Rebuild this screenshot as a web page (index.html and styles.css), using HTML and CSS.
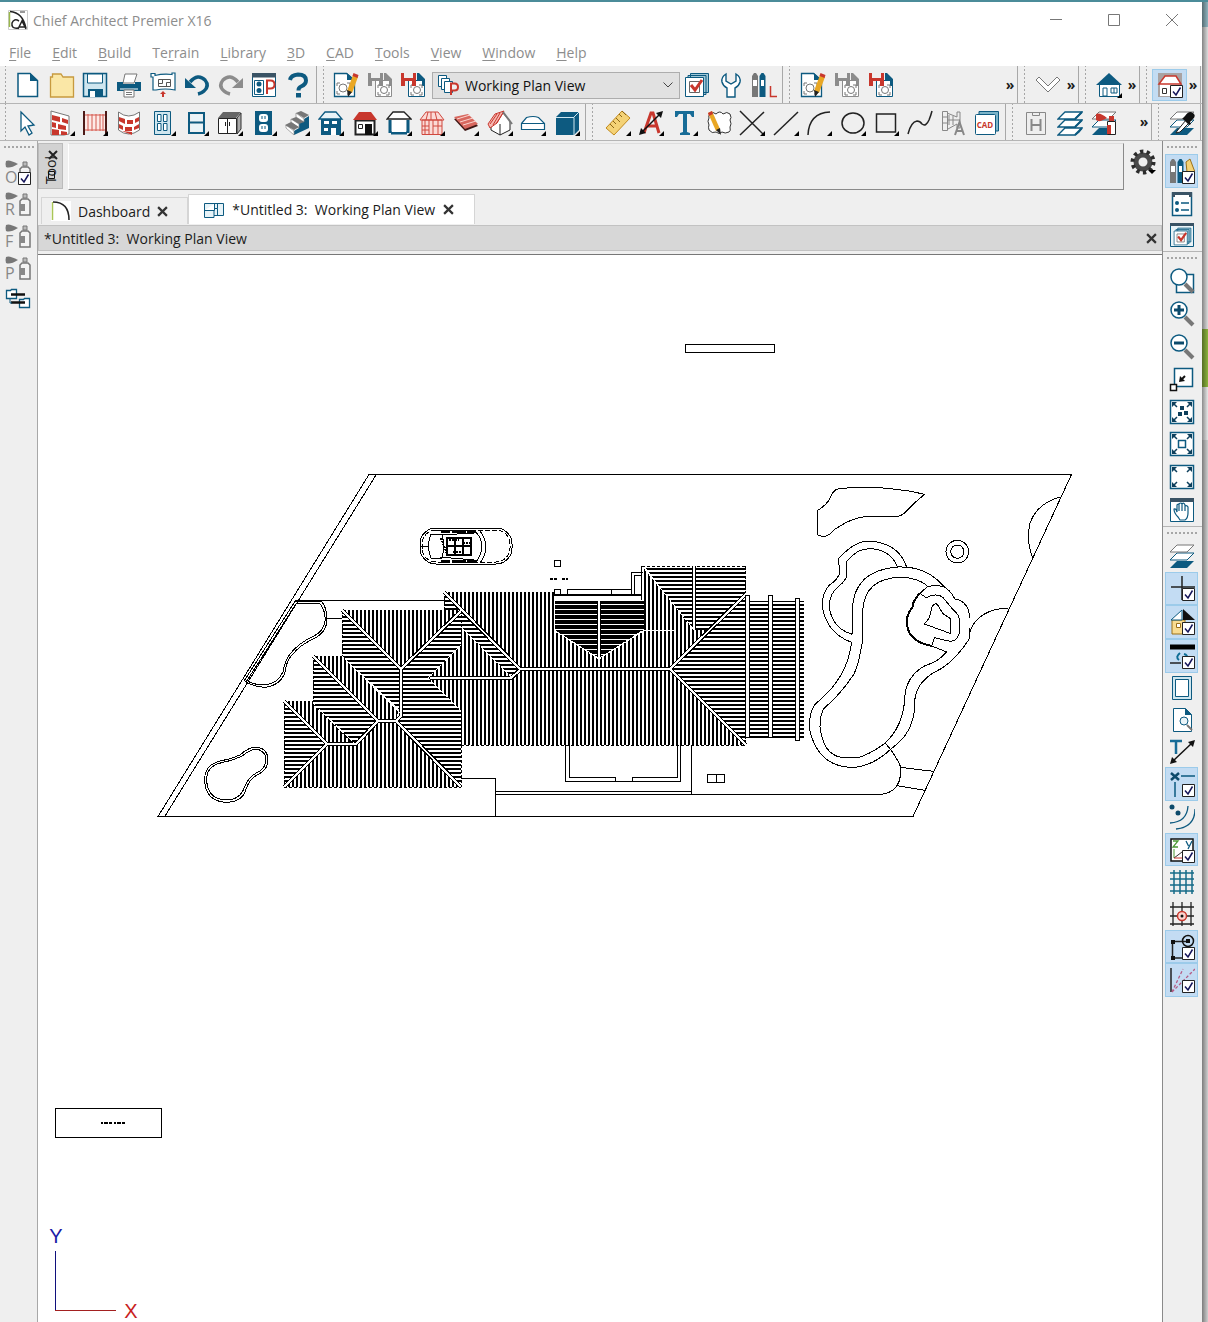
FILE: index.html
```html
<!DOCTYPE html>
<html lang="en">
<head>
<meta charset="utf-8">
<title>Chief Architect Premier X16</title>
<link rel="stylesheet" href="styles.css">
</head>
<body>
<svg class="defs" aria-hidden="true">
<defs>
<symbol id="ck" viewBox="0 0 26 26"><path d="M13.500 13.500h12v12h-12z" fill="#fff" stroke="#222"/><path d="M16 19.500l3 3.500 4.500-7.500" fill="none" stroke="#15155a" stroke-width="1.500"/></symbol>
<symbol id="dd" viewBox="0 0 26 26"><path d="M26 21v5h-5z" fill="#000"/></symbol>
<symbol id="new" viewBox="0 0 26 26"><path d="M3 1.500h12l7.500 7v16H3z" fill="#fff" stroke="#0d5a80" stroke-width="1.500"/><path d="M15 1v8h8z" fill="#0d5a80"/></symbol>
<symbol id="open" viewBox="0 0 26 26"><path d="M1.500 5h2V2h8.500l2 3h10.500v20h-23z" fill="#fae7a6" stroke="#c79a3f" stroke-width="1.300"/></symbol>
<symbol id="save" viewBox="0 0 26 26"><path d="M1.500 1.500h23v23h-23z" fill="#cfe6ef" stroke="#0d5a80" stroke-width="1.500"/><path d="M5.500 2h15v9h-15z" fill="#fff" stroke="#0d5a80"/><path d="M6 17h15v8H6z" fill="#0d5a80"/><path d="M8 19h5v6H8z" fill="#fff"/></symbol>
<symbol id="print" viewBox="0 0 26 26"><path d="M9 2h12l-3 9H7z" fill="#fff" stroke="#777"/><path d="M1 10h6v2h12v-2h6v9H1z" fill="#0d5a80"/><path d="M4 17h18" stroke="#fff"/><path d="M8 18h10v7H8z" fill="#fff" stroke="#777"/><path d="M10 20.500h6m-6 2h6" stroke="#777"/></symbol>
<symbol id="plot" viewBox="0 0 26 26"><path d="M1 1.500h4v2q8-2 17-1V1h3v17q-10-2-19 0H3V5H1z" fill="#fff" stroke="#0d5a80" stroke-width="1.200"/><path d="M8.500 7.500h12v7h-12zm0 4h4v-4m4 7v-4h4" fill="none" stroke="#555"/><path d="M13 19l3 3h-2v3h-2v-3h-2z" fill="#c8372d"/></symbol>
<symbol id="undo" viewBox="0 0 26 26"><path d="M6 10q8-9 15-2 5 6-1 11-2 2-6 3" fill="none" stroke="#0d5a80" stroke-width="3.500"/><path d="M1 6v10h11z" fill="#0d5a80"/></symbol>
<symbol id="redo" viewBox="0 0 26 26"><path d="M20 10q-8-9-15-2-5 6 1 11 2 2 6 3" fill="none" stroke="#8c8c8c" stroke-width="3.500"/><path d="M25 6v10H14z" fill="#8c8c8c"/></symbol>
<symbol id="prefs" viewBox="0 0 26 26"><path d="M1.500 1.500h23v23h-23z" fill="#fff" stroke="#0d5a80"/><path d="M1 1h24v4.500H1z" fill="#3a5365"/><path d="M3.500 8.500h9v14h-9z" fill="#fff" stroke="#0d5a80"/><circle cx="8" cy="12" r="2.500" fill="#0d5a80"/><circle cx="8" cy="18.500" r="2.500" fill="#0d5a80"/><path d="M16 22V8.500h3.500q4 0 4 4t-4 4H16" fill="none" stroke="#c8372d" stroke-width="2"/></symbol>
<symbol id="help" viewBox="0 0 26 26"><path d="M5 8q1-5 8-5.500 8 0 8 6 0 4-5 6-2.500 1-2.500 4" fill="none" stroke="#0d5a80" stroke-width="4"/><path d="M11 21h5v4.500h-5z" fill="#0d5a80"/></symbol>
<symbol id="viewedit" viewBox="0 0 26 26"><path d="M1.500 1.500h12l8 7v16h-20z" fill="#fff" stroke="#0d5a80" stroke-width="1.300"/><path d="M14 1v7h8z" fill="#0d5a80"/><path d="M4 14v-3h3m7 0h3v3m0 5v3h-3m-7 0H4v-3" fill="none" stroke="#777"/><circle cx="10" cy="16" r="4" fill="none" stroke="#777"/><path d="M20 3l5 2-6 16-5-2z" fill="#e9a724"/><path d="M20.500 1l5 2-1 3-5-2z" fill="#c8372d"/><path d="M14 18l5 2-4 5z" fill="#222"/></symbol>
<symbol id="sv" viewBox="0 0 26 26"><path d="M8.500 8.500h16v16h-16z" fill="#fff" stroke="currentColor"/><path d="M17 1h2l6 6v7h-3V9h-5z" fill="currentColor"/><path d="M11 16v-3h3m5 0h3v3m0 4v3h-3m-5 0h-3v-3" fill="none" stroke="#777"/><circle cx="17" cy="18" r="3.500" fill="none" stroke="#777"/></symbol>
<symbol id="hh" viewBox="0 0 26 26"><path d="M1 1h3v5h9V1h3v13h-4V9H5v5H1z" fill="currentColor"/></symbol>
<symbol id="viewsP" viewBox="0 0 26 26"><path d="M2.500 3.500h8v11h-8z" fill="#fff" stroke="#0d5a80"/><path d="M5.500 6.500h8v11h-8z" fill="#fff" stroke="#0d5a80"/><path d="M8.500 9.500h8v11h-8z" fill="#fff" stroke="#0d5a80"/><path d="M15 23V11.500h3.500q3.500 0 3.500 3.500t-3.500 3.500H15" fill="#eee" stroke="#c8372d" stroke-width="2"/></symbol>
<symbol id="layerck" viewBox="0 0 26 26"><path d="M6.500 1.500h18v19h-18zM4 3.500h18v19H4z" fill="#9fc7d7" stroke="#0d5a80"/><path d="M1.500 5.500h18v19h-18z" fill="#fff" stroke="#0d5a80"/><path d="M5.500 9.500h10v11h-10z" fill="none" stroke="#666"/><path d="M7 13l4 5 7-10" fill="none" stroke="#c8372d" stroke-width="3"/></symbol>
<symbol id="wrench" viewBox="0 0 26 26"><path d="M8 2v7l5 3 5-3V2q5 3 4 8-1 4-5 6v9H9v-9q-4-2-5-6-1-5 4-8z" fill="#fff" stroke="#0d5a80" stroke-width="1.400"/></symbol>
<symbol id="books" viewBox="0 0 26 26"><path d="M1 25V4l2-3h2l2 3v21z" fill="#777"/><path d="M2 8h4v6H2z" fill="#fff"/><path d="M8.500 25V4l2-3h2l2 3v21z" fill="#0d5a80"/><path d="M10 8h3v6h-3z" fill="#fff"/></symbol>
<symbol id="arrow" viewBox="0 0 26 26"><path d="M6 2l13 13-6 1 4 7-3 2-4-8-4 4z" fill="#fff" stroke="#0d5a80" stroke-width="1.300"/></symbol>
<symbol id="wall" viewBox="0 0 26 26"><path d="M2 1l18 5v18l-5 1H2z" fill="#fff" stroke="#777"/><path d="M3 5l8 2v5l-8-2zm10 3l6 2v4l-6-2zM3 12l4 1v5l-4-1zm6 2l8 2v4l-8-1zM3 19l7 1v5H3zm9 2l6 1v3h-6z" fill="#c8372d"/></symbol>
<symbol id="rail" viewBox="0 0 26 26"><path d="M2 4h22v17H2z" fill="#fdeae7"/><path d="M2 5h22M2 20h22M6 4v17M10 4v17M14 4v17M18 4v17M21 4v17" stroke="#d25a50"/><path d="M2 1v24M24 1v24" stroke="#4d1a17" stroke-width="2"/></symbol>
<symbol id="cwall" viewBox="0 0 26 26"><path d="M2.500 2q10 8 21 0v18q-11 8-21 0z" fill="#fff" stroke="#777"/><path d="M3 7l6 2v5l-6-3zm8 3l6 0v4h-6zm8-1l4-2v4l-4 2zM3 14l4 2v4l-4-2zm6 3h7v4H9zm9 0l5-3v4l-5 2zM6 21l10 1v3z" fill="#c8372d"/></symbol>
<symbol id="door" viewBox="0 0 26 26"><path d="M4.500 1.500h16v23h-16z" fill="#cfe6ef" stroke="#0d5a80"/><path d="M7.500 4.500h3.500v7H7.500zm6 0H17v7h-3.500zm-6 9h3.500v7H7.500zm6 0H17v7h-3.500z" fill="#fff" stroke="#0d5a80"/></symbol>
<symbol id="window" viewBox="0 0 26 26"><path d="M6 2v22M21 2v22M6 3h15M6 12.500h15M5 23h17" stroke="#0d5a80" stroke-width="2" fill="none"/><path d="M8 5h11v6H8zm0 9h11v7H8z" fill="#eaf4f8"/></symbol>
<symbol id="cabinet" viewBox="0 0 26 26"><path d="M6 2h18l-5 6H1z" fill="#666"/><path d="M1.500 8.500h18v15h-18zm9 0v15" fill="#fff" stroke="#222"/><path d="M20 8l4-5v16l-4 5z" fill="#aaa" stroke="#333"/><path d="M8.500 12v4m4-4v4" stroke="#222"/></symbol>
<symbol id="outlet" viewBox="0 0 26 26"><path d="M4 1h17v24H4z" fill="#0d5a80"/><rect x="8" y="4" width="9" height="8" rx="3" fill="#fff"/><rect x="8" y="14" width="9" height="8" rx="3" fill="#fff"/><path d="M11 6v3m3-3v3m-3 7v3m3-3v3" stroke="#0d5a80"/></symbol>
<symbol id="stairs" viewBox="0 0 26 26"><path d="M25 6v12L10 25v-4l5-3v-5l5-3V9z" fill="#0d5a80"/><path d="M12 3v4l8 5V9zM7 9v3l8 6v-4zM2 15v3l8 7v-4z" fill="#fff" stroke="#888" stroke-width=".7"/><path d="M12 3l5-2 8 4-5 3zM7 9l5-2 8 5-5 2zM1 15l6-3 8 5-5 3z" fill="#777"/></symbol>
<symbol id="hblue" viewBox="0 0 26 26"><path d="M3 9h20v16H3z" fill="#0d5a80"/><path d="M7 2h11l6 7H1z" fill="#eaf4f8" stroke="#0d5a80" stroke-width="1.300"/><path d="M6 11h5v3H6zm8 0h5v3h-5zm-8 7h4v3H6zm7 0h5v7h-5z" fill="#fff"/></symbol>
<symbol id="hred" viewBox="0 0 26 26"><path d="M3.500 10.500h19v14h-19z" fill="#fff" stroke="#222" stroke-width="2"/><path d="M7 2h12l6 8H1z" fill="#c8372d"/><path d="M13 14h7v11h-7z" fill="#111"/><path d="M6.500 14.500h4v4h-4z" fill="none" stroke="#222"/></symbol>
<symbol id="hout" viewBox="0 0 26 26"><path d="M4 10v13m18-13v13M5 23h16" stroke="#0d5a80" stroke-width="3"/><path d="M6 10h14v12H6z" fill="#fff"/><path d="M7 2h11l7 7H1z" fill="#fff" stroke="#222" stroke-width="1.300"/></symbol>
<symbol id="hframe" viewBox="0 0 26 26"><path d="M3 10h20v14.500H3zM7 2h12l6 8H1z" fill="#fbdad6" stroke="#d0483e"/><path d="M9 2l-2 8m5-8v8m4-8l2 8M6 10v15m4-15v15m4-15v15m5-15v15M3 16h7m4 0h9M3 20h7" stroke="#d0483e"/></symbol>
<symbol id="slab" viewBox="0 0 26 26"><path d="M1 9l14-4 10 11-13 5z" fill="#3f1715"/><path d="M1 7l14-3 10 10-13 5z" fill="#d8685f"/><path d="M4 9l13-4M7 12l13-4M10 15l13-4" stroke="#fbd5d0"/></symbol>
<symbol id="hroof" viewBox="0 0 26 26"><path d="M4 13v7l9 5 10-5v-9L16 3" fill="#fff" stroke="#222"/><path d="M1 14L8 4l9-3-7 12-7 5z" fill="#f7b9b3" stroke="#c8372d"/><path d="M3 14l7-10m-4 11l7-12m-4 11l7-11" stroke="#c8372d"/><path d="M16 2l9 12" stroke="#777" stroke-width="2"/><path d="M13 14v11" stroke="#222"/></symbol>
<symbol id="dome" viewBox="0 0 26 26"><path d="M1.500 13.500l5-6q7-2 12 0l6 6v6h-23zM1.500 13.500h23" fill="#fff" stroke="#0d5a80" stroke-width="1.200"/></symbol>
<symbol id="cube" viewBox="0 0 26 26"><path d="M2 7l5-5h18v18l-5 5H2z" fill="#0d5a80"/><path d="M2 7.500h18V25M20 7l5-5" fill="none" stroke="#cfe6ef"/></symbol>
<symbol id="ruler" viewBox="0 0 26 26"><path d="M1 18L17 1l8 7L9 25z" fill="#f4d276" stroke="#c28a1d"/><path d="M5 14l4 4m-1-7l3 3m0-6l4 4m-1-8l3 3m0-6l4 4" stroke="#8b6516"/></symbol>
<symbol id="Aarrow" viewBox="0 0 26 26"><path d="M6 23L13 3h2l6 20M9 16h10" fill="none" stroke="#c8372d" stroke-width="3"/><path d="M3 23L23 3" stroke="#111" stroke-width="1.500"/><path d="M25 1l-2 7-5-5zM1 25l2-7 5 5z" fill="#111"/></symbol>
<symbol id="T" viewBox="0 0 26 26"><path d="M3 1h19v6h-2l-2-3h-3v18l3 1v2H8v-2l3-1V4H7L5 7H3z" fill="#176c97"/></symbol>
<symbol id="cloud" viewBox="0 0 26 26"><path d="M4 4q3-3 6 0 4-4 7 0 4-3 7 0 2 4 0 6 2 4 0 7 1 4-1 5-4 2-7 0-3 3-6 0-4 2-7-2-1-3 0-5-2-4 0-7-1-2 1-4z" fill="#fff" stroke="#333"/><path d="M2 3l4-2 8 18-4 2z" fill="#e9a724"/><path d="M2 3l4-2 1 3-4 2z" fill="#c8372d"/><path d="M10 20l4-2 1 7z" fill="#222"/></symbol>
<symbol id="x" viewBox="0 0 26 26"><path d="M1 1l24 24M25 2L1 25" stroke="#222" stroke-width="1.500"/></symbol>
<symbol id="line" viewBox="0 0 26 26"><path d="M1 25L25 2" stroke="#222" stroke-width="1.500"/></symbol>
<symbol id="arc" viewBox="0 0 26 26"><path d="M2 25Q3 3 24 2" fill="none" stroke="#222" stroke-width="1.500"/></symbol>
<symbol id="circ" viewBox="0 0 26 26"><ellipse cx="13" cy="13" rx="11" ry="10" fill="none" stroke="#222" stroke-width="1.500"/></symbol>
<symbol id="sq" viewBox="0 0 26 26"><path d="M3.500 4h19v18h-19z" fill="none" stroke="#222" stroke-width="1.500"/></symbol>
<symbol id="spline" viewBox="0 0 26 26"><path d="M1 24q3-12 9-13 3 0 5 3 4 3 7-4 2-5 3-9" fill="none" stroke="#222" stroke-width="1.500"/></symbol>
<symbol id="deta" viewBox="0 0 26 26"><path d="M1.500 1.500h5v19h-5zM1 7h6m-6 6h6M6 3l10 4V2h3v16h-3v-4l-9 5M8 5v10m4-9v9m-5-5h12" fill="none" stroke="#888"/><path d="M14 25l4.500-13 4.500 13m-7-4h6" fill="none" stroke="#888" stroke-width="2"/></symbol>
<symbol id="cadb" viewBox="0 0 26 26"><path d="M5 1.500h19.500V21H5z" fill="#7cb4c8" stroke="#0d5a80"/><rect x="1.500" y="4.500" width="20" height="20" rx="1" fill="#fff" stroke="#0d5a80"/></symbol>
<symbol id="clipH" viewBox="0 0 26 26"><path d="M3.500 2.500h19v22h-19zm6 0v3h7v-3" fill="#eee" stroke="#888"/><path d="M8.500 9v12M17.500 9v12M8 15h10" stroke="#888" stroke-width="2"/></symbol>
<symbol id="layers" viewBox="0 0 26 26"><path d="M1 25l7-7h17l-3 4-4 3zM1 17l7-7h17l-7 7zM1 9l7-7h17l-7 7z" fill="#fff" stroke="#0d5a80" stroke-width="1.300"/><path d="M18 25l7-7m-7-1l7-7m-7-1l7-7" stroke="#0d5a80" stroke-width="2"/></symbol>
<symbol id="lay3" viewBox="0 0 26 26"><path d="M1 25l7-7h17l-7 7z" fill="#0d5a80"/><path d="M1 17l7-7h17l-7 7z" fill="#fff" stroke="#0d5a80"/><path d="M1 9l7-7h17l-7 7z" fill="#fff" stroke="#777"/></symbol>
<symbol id="spray" viewBox="0 0 26 26"><path d="M16.500 11.500h8v13h-8z" fill="#fff" stroke="#222"/><path d="M18 6h5v5h-5zM16 15h4v9h-4z" fill="#c8372d"/><path d="M5 4q4-2 11 4-8 5-11 2z" fill="#c8372d"/></symbol>
<symbol id="dropper" viewBox="0 0 26 26"><path d="M8 21l9-11 3 3-9 9-4 1z" fill="#fff" stroke="#222"/><path d="M14 8l2-2q4-6 8-3t-1 7l-2 2 1 2-2 1-7-7z" fill="#111"/></symbol>
<symbol id="down" viewBox="0 0 26 26"><path d="M1 8l3-3 9 9 9-9 3 3-12 12z" fill="#fff" stroke="#777"/></symbol>
<symbol id="home" viewBox="0 0 26 26"><path d="M3.500 12h20v12.500h-20z" fill="#fff" stroke="#0d5a80"/><path d="M13 1l13 12H0z" fill="#0d5a80"/><path d="M7 16h4v8H7zm8 0h6v5h-6zm3 0v5" fill="none" stroke="#0d5a80"/></symbol>
<symbol id="room" viewBox="0 0 26 26"><path d="M1 1h24v24H1z" fill="#a9a3a3"/><path d="M3 11h20v13H3z" fill="#fff"/><path d="M8 4h11l5 8H2z" fill="#fff" stroke="#c8372d" stroke-width="1.500"/><path d="M5.500 16.500h4v5h-4z" fill="none" stroke="#333"/></symbol>
<symbol id="gear" viewBox="0 0 26 26"><circle cx="13" cy="13" r="7" fill="none" stroke="#4a4a4a" stroke-width="5"/><circle cx="13" cy="13" r="10.500" fill="none" stroke="#2c2c2c" stroke-width="4" stroke-dasharray="3.300 3.300"/><path d="M18 21h8l-4 4z" fill="#000"/></symbol>
<symbol id="can" viewBox="0 0 26 26"><path d="M1 2q3-2 12 3-8 5-12 3-1-3 0-6z" fill="#777"/><path d="M15 24V10l2-2h6l2 2v14z" fill="#f4f4f4" stroke="#777" stroke-width="1.500"/><path d="M18 3h4v4h-4z" fill="#bbb" stroke="#777"/><path d="M15 13h5v7h-5z" fill="#888"/></symbol>
<symbol id="share" viewBox="0 0 26 26"><path d="M1.500 3.500h4l1-1h5v9h-10zM14.500 12.500h4l1-1h5v9h-10z" fill="#fff" stroke="#0d5a80" stroke-width="1.300"/><path d="M6 7.500h14M6 15.500h14" stroke="#111" stroke-width="2.500"/><path d="M5 12v4h2" fill="none" stroke="#0d5a80"/></symbol>
<symbol id="list" viewBox="0 0 26 26"><path d="M3.500 2h19v22.500h-19z" fill="#fff" stroke="#0d5a80" stroke-width="1.500"/><path d="M3 1h20v5H3z" fill="#3a5365"/><path d="M6 4h14v3H6z" fill="#fff"/><circle cx="8" cy="12" r="2" fill="#0d5a80"/><circle cx="8" cy="19" r="2" fill="#0d5a80"/><path d="M12 12h8m-8 7h8" stroke="#0d5a80" stroke-width="1.500"/></symbol>
<symbol id="mag" viewBox="0 0 26 26"><path d="M16 16l8 8" stroke="#777" stroke-width="4"/><circle cx="10" cy="9" r="8" fill="#fff" stroke="#0d5a80" stroke-width="1.500"/></symbol>
<symbol id="pan1" viewBox="0 0 26 26"><path d="M5.500 2.500h18v18h-18z" fill="#fff" stroke="#0d5a80" stroke-width="1.500"/><path d="M1.500 18.500h6v6h-6z" fill="#fff" stroke="#111" stroke-width="1.500"/><path d="M10 16l1-6 5 5z" fill="#111"/><path d="M12 14l4-4" stroke="#111" stroke-width="2"/></symbol>
<symbol id="fit" viewBox="0 0 26 26"><path d="M1.500 1.500h23v23h-23z" fill="#fff" stroke="#0d5a80" stroke-width="1.500"/><path d="M3 3h5L3 8zM23 3v5l-5-5zM3 23v-5l5 5zM23 23h-5l5-5z" fill="#0d3f5c"/><path d="M5 5l3 3m13-3l-3 3M5 21l3-3m13 3l-3-3" stroke="#0d3f5c" stroke-width="1.500"/></symbol>
<symbol id="hand" viewBox="0 0 26 26"><path d="M1.500 1.500h23v23h-23z" fill="#fff" stroke="#0d5a80"/><path d="M1 1h24v4H1z" fill="#3a5365"/><path d="M9 20q-4-4-4-8 2-1 3 3V8q2-2 2 0V7q2-2 3 0v0q2-2 3 1v1q2-1 3 1v6q0 5-3 7h-5zM10 8v6m3-7v7m3-6v6" fill="none" stroke="#0d5a80" stroke-width="1.200"/></symbol>
<symbol id="cross" viewBox="0 0 26 26"><path d="M13 1v24M2 12h24" stroke="#222" stroke-width="1.500"/></symbol>
<symbol id="halfh" viewBox="0 0 26 26"><path d="M3 11h13v14H3z" fill="#f8dc91" stroke="#9b7018"/><path d="M7.500 14.500h4v4h-4z" fill="#fff" stroke="#9b7018"/><path d="M13 1v10H2z" fill="#fff" stroke="#0d5a80"/><path d="M14 0l12 11H14z" fill="#111"/></symbol>
<symbol id="lw" viewBox="0 0 26 26"><path d="M1 4h25" stroke="#000" stroke-width="5"/><path d="M11 10q-5 4-1 7m5-6q4 1 3 5" fill="none" stroke="#0d6d95" stroke-width="2"/><path d="M1 20h11" stroke="#222" stroke-width="1.500"/></symbol>
<symbol id="sheet" viewBox="0 0 26 26"><path d="M3.500 1.500h19v23h-19z" fill="#cfe6ef" stroke="#0d5a80"/><path d="M6.500 4.500h13v17h-13z" fill="#fff" stroke="#0d5a80"/></symbol>
<symbol id="prev" viewBox="0 0 26 26"><path d="M4.500 1.500h12l6 6v17h-18z" fill="#fff" stroke="#0d5a80"/><path d="M16 1v7h7z" fill="#0d5a80"/><circle cx="15" cy="14" r="4" fill="#eaf4f8" stroke="#0d5a80"/><path d="M18 18l5 5" stroke="#777" stroke-width="2"/></symbol>
<symbol id="Tdim" viewBox="0 0 26 26"><path d="M1 2h12M7 2v13" stroke="#176c97" stroke-width="2.500"/><path d="M4 22L23 4" stroke="#111" stroke-width="1.500"/><path d="M26 1l-2 7-5-5zM1 25l2-7 5 5z" fill="#111"/></symbol>
<symbol id="snapx" viewBox="0 0 26 26"><path d="M2 2l8 7M10 2L2 9" stroke="#0d4a6b" stroke-width="2.500"/><path d="M12 5h14M6 11v15" stroke="#0d5a80" stroke-width="1.500"/></symbol>
<symbol id="waves" viewBox="0 0 26 26"><circle cx="3" cy="3" r="2.500" fill="#0d4a6b"/><circle cx="9" cy="9" r="2.500" fill="#0d4a6b"/><path d="M1 19q17-1 18-17M7 25q19-2 19-20" fill="none" stroke="#0d5a80" stroke-width="1.300"/></symbol>
<symbol id="zy" viewBox="0 0 26 26"><path d="M2 2h22v22H2z" fill="#fff" stroke="#111" stroke-width="1.500"/><path d="M4 4h5l-5 6h5" fill="none" stroke="#4c9a35" stroke-width="1.300"/><path d="M17 4l2.500 5M23 4l-4 8" fill="none" stroke="#0d5a80" stroke-width="1.300"/><path d="M5 21V12" stroke="#4c9a35"/><path d="M5 21l8-6" stroke="#333"/><path d="M5 21h8" stroke="#c8372d"/></symbol>
<symbol id="grid" viewBox="0 0 26 26"><path d="M5 1v24m6-24v24m6-24v24m6-24v24M1 4h24M1 10h24M1 16h24M1 22h24" stroke="#176c89" stroke-width="1.500"/></symbol>
<symbol id="gsnap" viewBox="0 0 26 26"><path d="M4 1v24m9-24v24m9-24v24M1 6h24M1 15h24M1 23h24" stroke="#222" stroke-width="1.300"/><circle cx="13" cy="15" r="4.500" fill="#fbd5d0" stroke="#c8372d" stroke-width="1.500"/><circle cx="13" cy="15" r="1.500" fill="#111"/></symbol>
<symbol id="osnap" viewBox="0 0 26 26"><path d="M3.500 7.500h16M3.500 7v17H14" fill="none" stroke="#222" stroke-width="1.500"/><circle cx="19" cy="7" r="5.500" fill="none" stroke="#111" stroke-width="1.500"/><path d="M2 6h4v4H2zm0 16h4v4H2zM17 5h4v4h-4z" fill="#111"/></symbol>
<symbol id="ang" viewBox="0 0 26 26"><path d="M2 1v24" stroke="#222" stroke-width="1.500"/><path d="M3 25L14 2M3 25L26 2" stroke="#b55b84" stroke-width="1.300" stroke-dasharray="3 2"/></symbol>
<symbol id="planico" viewBox="0 0 20 16"><path d="M.500 1.500h19v12H10v2H.500zM.500 8.500h10v-7m0 5h3v7m0-7v-5M10 8.500v5" fill="#e7f3f8" stroke="#0d5a80"/></symbol>
<pattern id="v" width="4" height="4" patternUnits="userSpaceOnUse"><path d="M0 0h2v4H0z"/></pattern>
<pattern id="h" width="4" height="4" patternUnits="userSpaceOnUse"><path d="M0 0h4v2H0z"/></pattern>
<pattern id="k" width="5" height="5" patternUnits="userSpaceOnUse"><path d="M0 0h5v4H0z"/></pattern>
</defs>
</svg>
<div class="desktop">
<div class="app">
<header class="title">
<svg class="logo" viewBox="0 0 20 20" aria-hidden="true"><path d="M.500.500h19v19H.500z" fill="#fff" stroke="#ccc"/><path d="M1.500 2v15" stroke="#9ab84a" stroke-width="1.500"/><path d="M2 1.500q13 1 16 17M11 11q-5-3-7 2-1 6 6 5M10 19l4-8 4 8m-7-2h6" fill="none" stroke="#222" stroke-width="1.500"/><path d="M12 2h5" stroke="#333"/></svg>
<h1>Chief Architect Premier X16</h1>
<div class="winbtns"><button aria-label="Minimize"><svg viewBox="0 0 12 12"><path d="M0 5.500h12"/></svg></button><button aria-label="Maximize"><svg viewBox="0 0 12 12"><path d="M.500.500h11v11H.500z"/></svg></button><button aria-label="Close"><svg viewBox="0 0 12 12"><path d="M0 0l12 12M12 0L0 12"/></svg></button></div>
</header>
<nav class="menu"><button><u>F</u>ile</button><button><u>E</u>dit</button><button><u>B</u>uild</button><button>Te<u>r</u>rain</button><button><u>L</u>ibrary</button><button><u>3</u>D</button><button><u>C</u>AD</button><button><u>T</u>ools</button><button><u>V</u>iew</button><button><u>W</u>indow</button><button><u>H</u>elp</button></nav>

<div class="bar first">
<div class="grp w-file"><button aria-label="New"><svg><use href="#new"/></svg></button><button aria-label="Open"><svg><use href="#open"/></svg></button><button aria-label="Save"><svg><use href="#save"/></svg></button><button aria-label="Print"><svg><use href="#print"/></svg></button><button aria-label="Send to layout"><svg><use href="#plot"/></svg></button><button aria-label="Undo"><svg><use href="#undo"/></svg></button><button aria-label="Redo"><svg><use href="#redo"/></svg></button><button aria-label="Preferences"><svg><use href="#prefs"/></svg></button><button aria-label="Help"><svg><use href="#help"/></svg></button></div>
<div class="grp w-view"><button aria-label="Edit view"><svg><use href="#viewedit"/></svg></button><button aria-label="Save view" class="dim"><svg><use href="#sv"/><use href="#hh"/></svg></button><button aria-label="Save view as"><svg><use href="#sv" class="blue"/><use href="#hh" class="red"/></svg></button>
<div class="combo"><svg><use href="#viewsP"/></svg><select aria-label="Plan view"><option>Working Plan View</option></select><svg class="caret" viewBox="0 0 10 6"><path d="M.500.500L5 5 9.500.500"/></svg></div>
<button aria-label="Layer sets"><svg><use href="#layerck"/></svg></button><button aria-label="Tools"><svg><use href="#wrench"/></svg></button><button aria-label="Library"><svg><use href="#books"/><path d="M19.500 14v10.500H26" fill="none" stroke="#c8372d" stroke-width="1.500"/></svg></button></div>
<div class="grp grow"><button aria-label="Edit layout"><svg><use href="#viewedit"/></svg></button><button aria-label="Save layout" class="dim"><svg><use href="#sv"/><use href="#hh"/></svg></button><button aria-label="Save layout as"><svg><use href="#sv" class="blue"/><use href="#hh" class="red"/></svg></button><button class="more" aria-label="More">»</button></div>
<div class="grp w-mini"><button aria-label="Down"><svg><use href="#down"/></svg></button><button class="more" aria-label="More">»</button></div>
<div class="grp w-mini"><button aria-label="Floor overview"><svg><use href="#home"/><use href="#dd"/></svg></button><button class="more" aria-label="More">»</button></div>
<div class="grp w-mini"><button class="on" aria-label="Reference floor"><svg><use href="#room"/><use href="#ck"/></svg></button><button class="more" aria-label="More">»</button></div>
</div>

<div class="bar">
<div class="grp w-build"><button aria-label="Select"><svg><use href="#arrow"/></svg></button><button aria-label="Wall"><svg><use href="#wall"/><use href="#dd"/></svg></button><button aria-label="Railing"><svg><use href="#rail"/><use href="#dd"/></svg></button><button aria-label="Curved wall"><svg><use href="#cwall"/></svg></button><button aria-label="Door"><svg><use href="#door"/><use href="#dd"/></svg></button><button aria-label="Window"><svg><use href="#window"/><use href="#dd"/></svg></button><button aria-label="Cabinet"><svg><use href="#cabinet"/><use href="#dd"/></svg></button><button aria-label="Electrical"><svg><use href="#outlet"/><use href="#dd"/></svg></button><button aria-label="Stairs"><svg><use href="#stairs"/><use href="#dd"/></svg></button><button aria-label="Floor"><svg><use href="#hblue"/><use href="#dd"/></svg></button><button aria-label="Roof"><svg><use href="#hred"/><use href="#dd"/></svg></button><button aria-label="Trim"><svg><use href="#hout"/><use href="#dd"/></svg></button><button aria-label="Framing"><svg><use href="#hframe"/><use href="#dd"/></svg></button><button aria-label="Slab"><svg><use href="#slab"/><use href="#dd"/></svg></button><button aria-label="Truss"><svg><use href="#hroof"/><use href="#dd"/></svg></button><button aria-label="Terrain"><svg><use href="#dome"/><use href="#dd"/></svg></button><button aria-label="Primitive"><svg><use href="#cube"/><use href="#dd"/></svg></button></div>
<div class="grp w-cad"><button aria-label="Measure"><svg><use href="#ruler"/><use href="#dd"/></svg></button><button aria-label="Dimension"><svg><use href="#Aarrow"/><use href="#dd"/></svg></button><button aria-label="Text"><svg><use href="#T"/><use href="#dd"/></svg></button><button aria-label="Revision cloud"><svg><use href="#cloud"/></svg></button><button aria-label="Point"><svg><use href="#x"/><use href="#dd"/></svg></button><button aria-label="Line"><svg><use href="#line"/><use href="#dd"/></svg></button><button aria-label="Arc"><svg><use href="#arc"/><use href="#dd"/></svg></button><button aria-label="Circle"><svg><use href="#circ"/><use href="#dd"/></svg></button><button aria-label="Box"><svg><use href="#sq"/><use href="#dd"/></svg></button><button aria-label="Spline"><svg><use href="#spline"/></svg></button><button aria-label="Detail"><svg><use href="#deta"/></svg></button><button aria-label="CAD block"><svg><use href="#cadb"/><text x="11" y="18" class="cadt">CAD</text></svg></button></div>
<div class="grp grow"><button aria-label="Hatch"><svg><use href="#clipH"/></svg></button><button aria-label="Layers"><svg><use href="#layers"/></svg></button><button aria-label="Paint layers"><svg><use href="#lay3"/><use href="#spray"/></svg></button><button class="more" aria-label="More">»</button></div>
<div class="grp w-one"><button aria-label="Layer eyedropper"><svg><use href="#lay3"/><use href="#dropper"/></svg></button></div>
</div>

<main class="work">
<aside class="left"><i class="hgrip"></i>
<button aria-label="Object painter"><svg><use href="#can"/><text x="0" y="24">O</text><use href="#ck"/></svg></button>
<button aria-label="Room painter"><svg><use href="#can"/><text x="0" y="24">R</text></svg></button>
<button aria-label="Floor painter"><svg><use href="#can"/><text x="0" y="24">F</text></svg></button>
<button aria-label="Plan painter"><svg><use href="#can"/><text x="0" y="24">P</text></svg></button>
<button aria-label="Project"><svg><use href="#share"/></svg></button></aside>
<section class="center">
<div class="dock"><button class="vert" aria-label="Close tool panel"><span>Tool</span><svg viewBox="0 0 26 46"><path d="M10 7l8 8M18 7l-8 8" stroke="#222" stroke-width="2"/><path d="M9.500 27.500h6v7h-6z" fill="none" stroke="#111"/></svg></button><div class="panel"></div><button class="gearbtn" aria-label="Settings"><svg><use href="#gear"/></svg></button></div>
<div class="tabs"><div class="tab"><svg class="ti" viewBox="0 0 20 20"><path d="M0 0h20v20H0z" fill="#fff"/><path d="M1.500 1v18" stroke="#a9c557" stroke-width="1.500"/><path d="M2 1Q18 1 18 19" fill="none" stroke="#222" stroke-width="1.500"/></svg><a href="#plan">Dashboard</a><button aria-label="Close Dashboard"><svg class="xx" viewBox="0 0 10 10"><path d="M1 1l8 8M9 1L1 9"/></svg></button></div>
<div class="tab act"><svg class="ti"><use href="#planico"/></svg><a href="#plan">*Untitled 3:&nbsp; Working Plan View</a><button aria-label="Close Untitled 3"><svg class="xx" viewBox="0 0 10 10"><path d="M1 1l8 8M9 1L1 9"/></svg></button></div></div>
<div class="sub"><h2>*Untitled 3:&nbsp; Working Plan View</h2><button aria-label="Close view"><svg class="xx" viewBox="0 0 10 10"><path d="M1 1l8 8M9 1L1 9"/></svg></button></div>
<div class="canvas" id="plan">
<svg class="plan" viewBox="38 255 1124 1067" preserveAspectRatio="xMinYMin meet" role="img" aria-label="Site plan">
<g class="ln">
<path d="M685.500 344.500h89v8h-89zM55.500 1108.500h106v29h-106z"/>
<path d="M369 474.500H1071.500L913 816.500H158zM376 475L165 816"/>
<path d="M295 600.500H444M327 618.500h15M461 778.500h34.500v38M495.500 791.500h196M495.500 794.500H880q20-2 20.500-22v-6q-5-12-15-23M691.500 745v49M565.500 745v36.500h115V745M569.500 745v32.500h46v4m17 0v-4h45V745M707.500 774.500h17v8h-17zM716 774v9M554.500 560.500h6v6h-6zM554.500 589.500h6v6h-6zM567 595v-5.500h65M611.500 590v6M631.500 596v-23.500h11M634.500 596v-20.500h7M641.500 600v-34.500"/>
<path d="M555 594.500h87" stroke-width="2"/>
<path d="M550 579h8m4 0h6" stroke-width="2" stroke-dasharray="3 1"/>
<path d="M101 1122.500h25" stroke-width="2" stroke-dasharray="2 1 4 1 3 2"/>
</g>
<g class="ln" transform="translate(150 460) scale(.33333)">
<path d="M435 424H515Q535 450 530 490 525 520 490 537 450 555 428 583 410 600 405 635 395 675 345 682 305 680 283 662z"/>
<path d="M438 431H510Q528 455 525 485 520 515 488 530 445 550 420 582 405 602 399 635 385 670 345 675 310 675 291 662z"/>
<path d="M215 902Q165 912 164 955 163 1025 230 1027 280 1025 289 985 300 955 325 943 355 930 354 895 350 862 315 862 295 862 270 885 245 897 215 902z"/>
<path d="M215 908Q172 918 170 955 170 1018 230 1020 272 1018 283 982 295 950 323 937 348 925 348 895 343 868 315 868 298 870 275 889 245 903 215 908z"/>
</g>
<g class="ln" transform="translate(790 460) scale(.33333)">
<path d="M82 152Q110 135 120 115 128 90 145 87 220 75 320 88 360 92 404 103 370 130 345 158 330 170 320 169H230Q185 175 150 198 135 205 120 222 105 235 82 224z"/>
<path d="M811 111Q740 130 720 190 708 240 727 290M655 444Q560 448 538 520M330 922L430 934M320 977L405 991"/>
<circle cx="502" cy="275" r="34"/><circle cx="502" cy="275" r="20"/>
<path d="M185 547Q110 520 97 440 97 385 130 367 155 345 148 320L144 298Q195 240 240 244 325 248 350 321M187 523Q125 505 118 440 118 400 145 380 170 360 170 345V305Q200 265 240 266 300 268 323 321"/>
<path d="M187 523V450Q190 330 325 321 410 318 462 380 480 390 495 417 538 425 539 475M539 505V535Q490 610 440 633 370 670 374 740 370 820 305 865 245 922 185 922 85 920 59 810 55 765 74 735L125 685Q175 625 185 547"/>
<path d="M412 377Q380 352 330 352 225 355 218 450V540Q205 620 190 645 150 705 102 745 90 765 90 800 100 885 155 892H207Q235 885 285 850 338 800 344 720 345 650 405 617 445 605 470 576L425 558"/>
<path d="M390 400L412 380 435 376 462 380M388 399L410 414 420 408Q450 398 465 420L490 450Q510 465 508 485V520Q500 545 480 544L433 533 425 558"/>
<path d="M437 430L445 437 458 460 483 477V521L403 492 417 475 427 438z"/>
<path d="M388 400Q365 430 368 440 345 470 352 500 360 545 425 558" stroke-width="2"/>
</g>
<g class="roof">
<path fill="url(#h)" d="M284 701l43 44-43 42zM313 656l65 65-22 24-8-5-35-36zM342 610l60 60v42l-60-56zM461 611l-60 58v50l-5 3 65 65v-77l-33-32 33-33zM444 592v18h17zM461 613l57 56-6 8-51-50zM746 595l-76 75 76 75zM644 566h102v29l-35 35h-18z"/>
<path fill="url(#v)" d="M284 787l43-42h30l21-23h18l65 65zM285 701h28v4l43 39h-29zM313 656h29l56 56-2 10h-18zM342 610h119l-60 59zM428 678l33-33v66zM461 627l50 50h-50zM444 592h111v39l44 28 43-28 68-1-40 39H520zM461 678h52l7-8h150l76 75H461zM644 568l50 62h-50z"/>
<path fill="#fff" d="M555 601h89v30l-45 28-44-28z"/>
<path fill="url(#k)" d="M555 601h89v29l-45 28-44-28z"/>
<path fill="url(#h)" d="M748 601h56v137h-56z"/>
<path class="edge" d="M284.500 701v86M313 656v45M342 610v46M444 592v18M745.500 566v179M461 610v177M642 566h104M284 787h177M461 745h285"/>
<path class="rb" d="M284 701l43 43h29l22-23h18l5-5v-47l60-58M327 744l-43 43M313 656l65 65M342 610l59 59M396 721l65 66M444 592l76 77h150l76-75M670 669l76 76M430 678h81l9-8M599 601v57M694 566v64"/>
<path class="rw" d="M284 701l43 43h29l22-23h18l5-5v-47l60-58M327 744l-43 43M313 656l65 65M342 610l59 59M396 721l65 66M444 592l76 77h150l76-75M670 669l76 76M430 678h81l9-8M599 601v57M694 566v64"/>
<path class="seam" d="M555 631l44 28 43-28M644 568l50 62M313 703l43 42M342 656l58 57M428 678l33-33M428 678l33 33M461 627l50 50"/>
<path class="post" d="M745.500 595.500h4v142h-4zM768.500 595.500h4v142h-4zM795.500 598.500h4v142h-4z"/>
</g>
<g class="ln car"><rect x="420" y="528" width="92" height="36" rx="16"/><rect x="422" y="530" width="88" height="32" rx="14" stroke-dasharray="5 2"/><path d="M431 534q-5 12 0 24h11q3-12 0-24zM476 532q12 14 0 30M480 531q12 16 0 32M440 535l34-2M440 557l34 3M420 546h8"/><path d="M441 531h36M441 561h36" stroke-width="3" stroke-dasharray="9 2 14 1"/><path d="M447 538h24v17h-24zM447 546h24M455 537v19M463 537v19" stroke-width="2"/><path d="M449 540h10m4 3h8m-18 9h12M441 538l6 16" stroke-width="2" stroke-dasharray="2 1"/></g>
<path d="M55.500 1251v59" stroke="#10107c"/><path d="M55 1310.500h61" stroke="#a32020"/>
<text x="56" y="1243" class="axis" fill="#1a1aa6">Y</text><text x="131" y="1318" class="axis" fill="#c81e1e">X</text>
</svg>
</div>
</section>
<aside class="right">
<div class="sg g3"><i class="hgrip"></i><button class="on" aria-label="Library browser"><svg><use href="#books"/><path d="M17 4l4-3 3 8 2 5H18z" fill="#f4d276" stroke="#9b7018"/><use href="#ck"/></svg></button><button aria-label="Project browser"><svg><use href="#list"/></svg></button><button aria-label="Display options"><svg><path d="M1.500 1.500h23v23h-23z" fill="#eaf4f8" stroke="#0d5a80"/><path d="M1 1h24v3H1z" fill="#3a5365"/><svg x="4" y="5" width="19" height="19"><use href="#layerck" width="19" height="19"/></svg></svg></button></div>
<div class="sg g8"><i class="hgrip"></i><button aria-label="Zoom"><svg><path d="M7.500 6.500h17v18h-17z" fill="#fff" stroke="#0d5a80" stroke-width="1.500"/><use href="#mag"/></svg></button><button aria-label="Zoom in"><svg><use href="#mag"/><path d="M5 9h10M10 4v10" stroke="#0d4a6b" stroke-width="3"/></svg></button><button aria-label="Zoom out"><svg><use href="#mag"/><path d="M5 9h10" stroke="#0d4a6b" stroke-width="3"/></svg></button><button aria-label="Undo zoom"><svg><use href="#pan1"/></svg></button><button aria-label="Fill window"><svg><use href="#fit"/><path d="M11 7h4v4h-4zm-2 6h4v4H9zm6-1h4v4h-4z" fill="#0d3f5c"/></svg></button><button aria-label="Fill building"><svg><use href="#fit"/><path d="M9.500 9.500h7v7h-7z" fill="#fff" stroke="#0d5a80" stroke-width="1.500"/></svg></button><button aria-label="Fit window"><svg><use href="#fit"/></svg></button><button aria-label="Pan"><svg><use href="#hand"/></svg></button></div>
<div class="sg g14"><i class="hgrip"></i><button aria-label="Layer display"><svg><use href="#lay3"/></svg></button><button class="on" aria-label="Crosshairs"><svg><use href="#cross"/><use href="#ck"/></svg></button><button class="on" aria-label="Color"><svg><use href="#halfh"/><use href="#ck"/></svg></button><button class="on" aria-label="Line weights"><svg><use href="#lw"/><use href="#ck"/></svg></button><button aria-label="Sheet"><svg><use href="#sheet"/></svg></button><button aria-label="Print preview"><svg><use href="#prev"/></svg></button><button aria-label="Temporary dimensions"><svg><use href="#Tdim"/></svg></button><button class="on" aria-label="Extension snaps"><svg><use href="#snapx"/><use href="#ck"/></svg></button><button aria-label="Bumping"><svg><use href="#waves"/></svg></button><button class="on" aria-label="Axes"><svg><use href="#zy"/><use href="#ck"/></svg></button><button aria-label="Grid"><svg><use href="#grid"/></svg></button><button aria-label="Grid snaps"><svg><use href="#gsnap"/></svg></button><button class="on" aria-label="Object snaps"><svg><use href="#osnap"/><use href="#ck"/></svg></button><button class="on" aria-label="Angle snaps"><svg><use href="#ang"/><use href="#ck"/></svg></button></div>
</aside>
</main>
</div>
</div>
</body>
</html>
```
FILE: styles.css
```css
* { box-sizing: border-box; }
body { margin: 0; font-family: "Open Sans", "Noto Sans", sans-serif; font-size: 14px; color: #1b1b1b; }
button { border: 0; padding: 0; background: none; font: inherit; color: inherit; }
.defs { position: absolute; width: 0; height: 0; }
.desktop { min-height: 100vh; display: flex; padding: 2px 6px 0 0;
  background: linear-gradient(#4b8c99 0 2px, transparent 2px), linear-gradient(to right, transparent calc(100% - 6px), #0006 calc(100% - 6px), transparent 100%), linear-gradient(#8fb4bf 0 27px, #dcdcdc 27px 329px, #8cb43c 329px 387px, #e8e8e8 387px 440px, #cfcfcf 440px); }
.app { flex: 1; min-width: 0; display: flex; flex-direction: column; background: #efefef; }
.title { display: flex; align-items: center; height: 36px; padding-left: 8px; gap: 5px; background: #fff; color: #8d8d8d; }
.title h1 { margin: 0; font-size: 14px; font-weight: 400; flex: 1; }
.logo { width: 20px; height: 20px; }
.winbtns { display: flex; padding-right: 1px; }
.winbtns button { width: 58px; height: 32px; display: grid; place-items: center; }
.winbtns svg { width: 12px; height: 12px; fill: none; stroke: #777; }
.menu { display: flex; height: 28px; padding-left: 9px; gap: 21px; background: #fff; color: #8d8d8d; align-items: center; }
.menu u { text-underline-offset: 2px; }
.bar { display: flex; height: 37px; border-bottom: 1px solid #b5b5b5; }
.bar.first { height: 38px; }
.grp { display: flex; align-items: center; padding: 1px 1px 0 11px; border-right: 1px solid #a8a8a8; margin-right: 1px; min-width: 0;
  background: radial-gradient(circle, #a6a6a6 1px, transparent 1px) 4px 6px / 3px 4px repeat-y; }
.grp > button { flex: 1 1 34px; height: 32px; display: grid; place-items: center; }
.grp.grow > button { flex: 0 0 34px; }
.grp svg, .left svg, .right button > svg { width: 26px; height: 26px; }
.grp .more, .grp.grow .more { flex: 0 0 12px; margin-left: auto; font-weight: 700; font-size: 14px; padding-bottom: 2px; }
.w-file { flex: 0 0 317px; }
.w-view { flex: 0 0 465px; }
.w-mini { flex: 0 0 60px; }
.w-build { flex: 0 0 586px; }
.w-cad { flex: 0 0 419px; padding-left: 14px; }
.w-one { flex: 0 0 48px; }
.grow { flex: 1; padding-left: 12px; }
.dim { color: #8c8c8c; }
.blue { color: #0d5a80; }
.red { color: #c8372d; }
.combo { position: relative; display: flex; flex: 0 0 248px; height: 27px; margin-left: 2px; align-items: center; border: 1px solid #adadad; background: #e1e1e1; padding-left: 3px; }
.combo select { flex: 1; height: 25px; appearance: none; border: 0; background: none; padding: 0 20px 0 3px; font: inherit; color: #111; }
.combo .caret { position: absolute; right: 6px; width: 10px; height: 6px; fill: none; stroke: #444; }
.cadt { font: 700 8px "Open Sans", sans-serif; fill: #c8372d; text-anchor: middle; }
.on { background: #c3dcf3; border: 1px solid #9ccbea; }
.work { flex: 1; display: flex; min-height: 0; }
.left { flex: 0 0 38px; display: flex; flex-direction: column; border-right: 1px solid #a8a8a8; }
.left button { height: 32px; padding-right: 2px; display: grid; place-items: center; }
.left text { font: 16px "Open Sans", sans-serif; fill: #888; }
.left svg { overflow: visible; }
.hgrip { height: 15px; margin: 0 3px; background: radial-gradient(circle, #a6a6a6 1px, transparent 1px) 0 4px / 4px 4px repeat-x; }
.center { flex: 1; min-width: 0; display: flex; flex-direction: column; }
.dock { display: flex; height: 49px; padding-top: 2px; }
.vert { position: relative; width: 25px; height: 46px; background: #d2d2d2; border: 1px solid #bbb; }
.vert span { position: absolute; left: 3px; bottom: 4px; writing-mode: vertical-rl; transform: rotate(180deg); font-size: 14px; line-height: 18px; }
.vert svg { position: absolute; left: 0; top: 0; width: 26px; height: 46px; }
.panel { flex: 1; margin-left: 5px; height: 47px; border: 1px solid #8a8a8a; border-top-color: #ddd; border-left-color: #fff; }
.gearbtn { width: 38px; height: 38px; display: grid; place-items: center; }
.gearbtn svg { width: 26px; height: 26px; }
.tabs { display: flex; align-items: flex-end; height: 34px; padding-left: 3px; }
.tab { display: flex; align-items: center; gap: 7px; height: 27px; padding: 0 19px 0 9px; border: 1px solid #d5d5d5; border-bottom: 0; }
.tab.act { height: 30px; background: #fff; padding: 0 20px 0 15px; gap: 8px; }
.tab a { color: inherit; text-decoration: none; }
.ti { width: 20px; height: 20px; }
.xx { width: 11px; height: 11px; display: block; stroke: #333; stroke-width: 2; }
.sub { display: flex; align-items: center; justify-content: space-between; height: 26px; margin-top: 1px; padding: 0 4px 0 5px; background: #d7d7d7; border: 1px solid #c2c2c2; }
.sub h2 { margin: 0; font-size: 14px; font-weight: 400; }
.canvas { flex: 1; min-height: 0; margin-top: 3px; border-top: 1px solid #777; background: #fff; }
.plan { display: block; width: 100%; height: auto; }
.ln { fill: none; stroke: #000; shape-rendering: crispEdges; }
.ln path, .ln circle { vector-effect: non-scaling-stroke; }
.roof { shape-rendering: crispEdges; }
.edge { fill: none; stroke: #000; stroke-dasharray: 3 2; }
.rb { fill: none; stroke: #000; stroke-width: 4; }
.rw { fill: none; stroke: #fff; stroke-width: 2; }
.seam { fill: none; stroke: #fff; stroke-dasharray: 3 1; }
.post { fill: #fff; stroke: #000; }
.axis { font: 20px "Liberation Sans", Arial, sans-serif; text-anchor: middle; }
.right { flex: 0 0 40px; border-left: 1px solid #8a8a8a; }
.sg { display: flex; flex-direction: column; border-bottom: 1px solid #b5b5b5; }
.sg button { flex: 1; min-height: 0; margin: 0 4px 0 2px; display: grid; place-items: center; }
.right .hgrip { height: 13px; }
.g3 { height: 111px; }
.g8 { height: 275px; }
.g14 { height: 470px; border: 0; }
```
